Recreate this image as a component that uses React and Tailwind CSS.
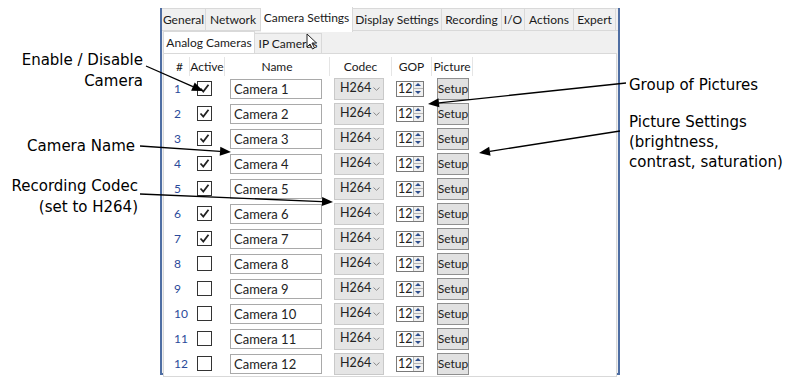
import React from 'react';

// Camera settings dialog with callout annotations

const TABS = [
  ['General', 'w-[44px]'],
  ['Network', 'w-[55px]'],
  ['Camera Settings', 'w-[92px]'],
  ['Display Settings', 'w-[89px]'],
  ['Recording', 'w-[60px]'],
  ['I/O', 'w-[23px]'],
  ['Actions', 'w-[49px]'],
  ['Expert', 'w-[42px]'],
];

const cameras = Array.from({ length: 12 }, (_, i) => ({
  id: i + 1,
  name: `Camera ${i + 1}`,
  active: i < 7,
}));

const Check = ({ on }) => (
  <div className="w-[15px] h-[15px] border border-[#333] bg-white flex items-center justify-center">
    {on && (
      <svg width="11" height="11" viewBox="0 0 11 11">
        <polyline points="1.5,5.5 4.3,8.5 9.5,1.8" fill="none" stroke="#222" strokeWidth="1.8" />
      </svg>
    )}
  </div>
);

const Spinner = () => (
  <div className="flex h-[16px] w-[28px] border border-[#7a7a7a] bg-white">
    <span className="flex-1 leading-[14px] pl-[1px] text-[12.5px] text-[#222]">12</span>
    <div className="w-[12px] flex flex-col border-l border-[#b5b5b5] bg-[#f0f0f0]">
      <div className="flex-1 flex items-center justify-center border-b border-[#b5b5b5]">
        <svg width="6" height="3" viewBox="0 0 6 3"><polygon points="0,3 3,0 6,3" fill="#2d4d8c" /></svg>
      </div>
      <div className="flex-1 flex items-center justify-center">
        <svg width="6" height="3" viewBox="0 0 6 3"><polygon points="0,0 6,0 3,3" fill="#2d4d8c" /></svg>
      </div>
    </div>
  </div>
);

const Row = ({ cam }) => (
  <div className="flex items-center h-[25px]">
    <div className="w-[24px] pl-[7px] text-[#2b4a9a]">{cam.id}</div>
    <div className="w-[35px] pl-[6px]"><Check on={cam.active} /></div>
    <div className="w-[104px] pl-[4px]">
      <div className="w-[92px] h-[20px] border border-[#a9a9a9] bg-white px-[3px] leading-[18px] text-[13px] text-[#222]">{cam.name}</div>
    </div>
    <div className="w-[62px] pl-[4px]">
      <div className="w-[50px] h-[22px] border border-[#c9c9c9] bg-[#e5e5e5] flex items-center justify-between pl-[5px] pr-[3px] text-[12.5px] text-[#222]">
        <span>H264</span>
        <svg width="7" height="4" viewBox="0 0 7 4"><polyline points="0.5,0.5 3.5,3.3 6.5,0.5" fill="none" stroke="#8a8a8a" strokeWidth="1" /></svg>
      </div>
    </div>
    <div className="w-[40px] pl-[4px]"><Spinner /></div>
    <div className="pl-[5px]">
      <div className="w-[32px] h-[22px] border border-[#8f8f8f] bg-[#e1e1e1] flex items-center justify-center text-[#222]">Setup</div>
    </div>
  </div>
);

const Head = ({ w, children, className = '' }) => (
  <div className={`${w} h-full flex items-center justify-center border-r border-[#e5e5e5] ${className}`}>{children}</div>
);

const Arrow = ({ x1, y1, x2, y2 }) => {
  const a = Math.atan2(y2 - y1, x2 - x1);
  const L = 11, W = 4.5;
  const bx = x2 - L * Math.cos(a), by = y2 - L * Math.sin(a);
  const px = -Math.sin(a) * W, py = Math.cos(a) * W;
  return (
    <g>
      <line x1={x1} y1={y1} x2={bx} y2={by} stroke="#000" strokeWidth="1.3" />
      <polygon points={`${x2},${y2} ${bx + px},${by + py} ${bx - px},${by - py}`} fill="#000" />
    </g>
  );
};

export default function App() {
  return (
    <div className="relative w-[791px] h-[382px] bg-white flex overflow-hidden" style={{ fontFamily: 'Lato, "Noto Sans", sans-serif' }}>
      {/* Left callouts */}
      <div className="w-[160px] shrink-0 pr-[17px] text-right text-[15px] leading-[21px] text-black" style={{ fontFamily: '"DejaVu Sans", Verdana, sans-serif' }}>
        <div className="mt-[50px]">Enable / Disable<br />Camera</div>
        <div className="mt-[44px] pr-[8px]">Camera Name</div>
        <div className="mt-[19px] pr-[5px]">Recording Codec<br />(set to H264)</div>
      </div>

      {/* Dialog window */}
      <div className="w-[460px] shrink-0 mt-[8px] h-[367px] border-2 border-t-0 border-[#4f6ea3] bg-[#f0f0f0] flex flex-col text-[12px] text-[#1a1a1a]">
        <div className="flex h-[23px] border-t border-[#d9d9d9] whitespace-nowrap">
          {TABS.map(([t, w]) => (
            <div
              key={t}
              className={`${w} shrink-0 flex items-center justify-center border-r border-[#d9d9d9] ${t === 'Camera Settings' ? 'bg-white -mt-[2px] h-[25px] pb-[3px]' : 'bg-[#f0f0f0] h-[22px] border-b'}`}
            >
              {t}
            </div>
          ))}
          <div className="flex-1 border-b border-[#d9d9d9]" />
        </div>
        <div className="flex h-[24px] items-end px-[1px] whitespace-nowrap">
          <div className="h-[22px] w-[92px] flex items-center justify-center bg-white border border-b-0 border-[#d9d9d9]">Analog Cameras</div>
          <div className="relative h-[20px] w-[67px] flex items-center justify-center bg-[#f0f0f0] border border-l-0 border-b-0 border-[#d9d9d9]">
            IP Cameras
            <svg className="absolute left-[51px] top-[-1px]" width="12" height="17" viewBox="0 0 12 17">
              <polygon points="1,1 1,14 4,11 6.5,16 8.5,15 6,10 10.5,10" fill="#fff" stroke="#222" strokeWidth="1" strokeLinejoin="round" />
            </svg>
          </div>
        </div>
        <div className="flex-1 mx-[1px] mb-[1px] bg-white border border-[#d9d9d9] pl-[3px] pt-[3px]">
          <div className="flex h-[19px] items-center text-[#1a1a1a]">
            <Head w="w-[23px]" className="justify-end pr-[6px]">#</Head>
            <Head w="w-[35px]">Active</Head>
            <Head w="w-[105px]">Name</Head>
            <Head w="w-[62px]">Codec</Head>
            <Head w="w-[40px]">GOP</Head>
            <Head w="w-[41px]">Picture</Head>
          </div>
          <div className="flex flex-col">
            {cameras.map((c) => <Row key={c.id} cam={c} />)}
          </div>
        </div>
      </div>

      {/* Right callouts */}
      <div className="flex-1 pl-[9px] text-[15px] leading-[20px] text-black" style={{ fontFamily: '"DejaVu Sans", Verdana, sans-serif' }}>
        <div className="mt-[75px]">Group of Pictures</div>
        <div className="mt-[17px]">Picture Settings<br />(brightness,<br />contrast, saturation)</div>
      </div>

      {/* Arrows */}
      <svg className="absolute inset-0 pointer-events-none" width="791" height="382">
        <Arrow x1={146} y1={66} x2={203} y2={91} />
        <Arrow x1={140} y1={146} x2={231} y2={152} />
        <Arrow x1={140} y1={194} x2={333} y2={202} />
        <Arrow x1={626} y1={83} x2={428} y2={104} />
        <Arrow x1={620} y1={131} x2={479} y2={153} />
      </svg>
    </div>
  );
}
